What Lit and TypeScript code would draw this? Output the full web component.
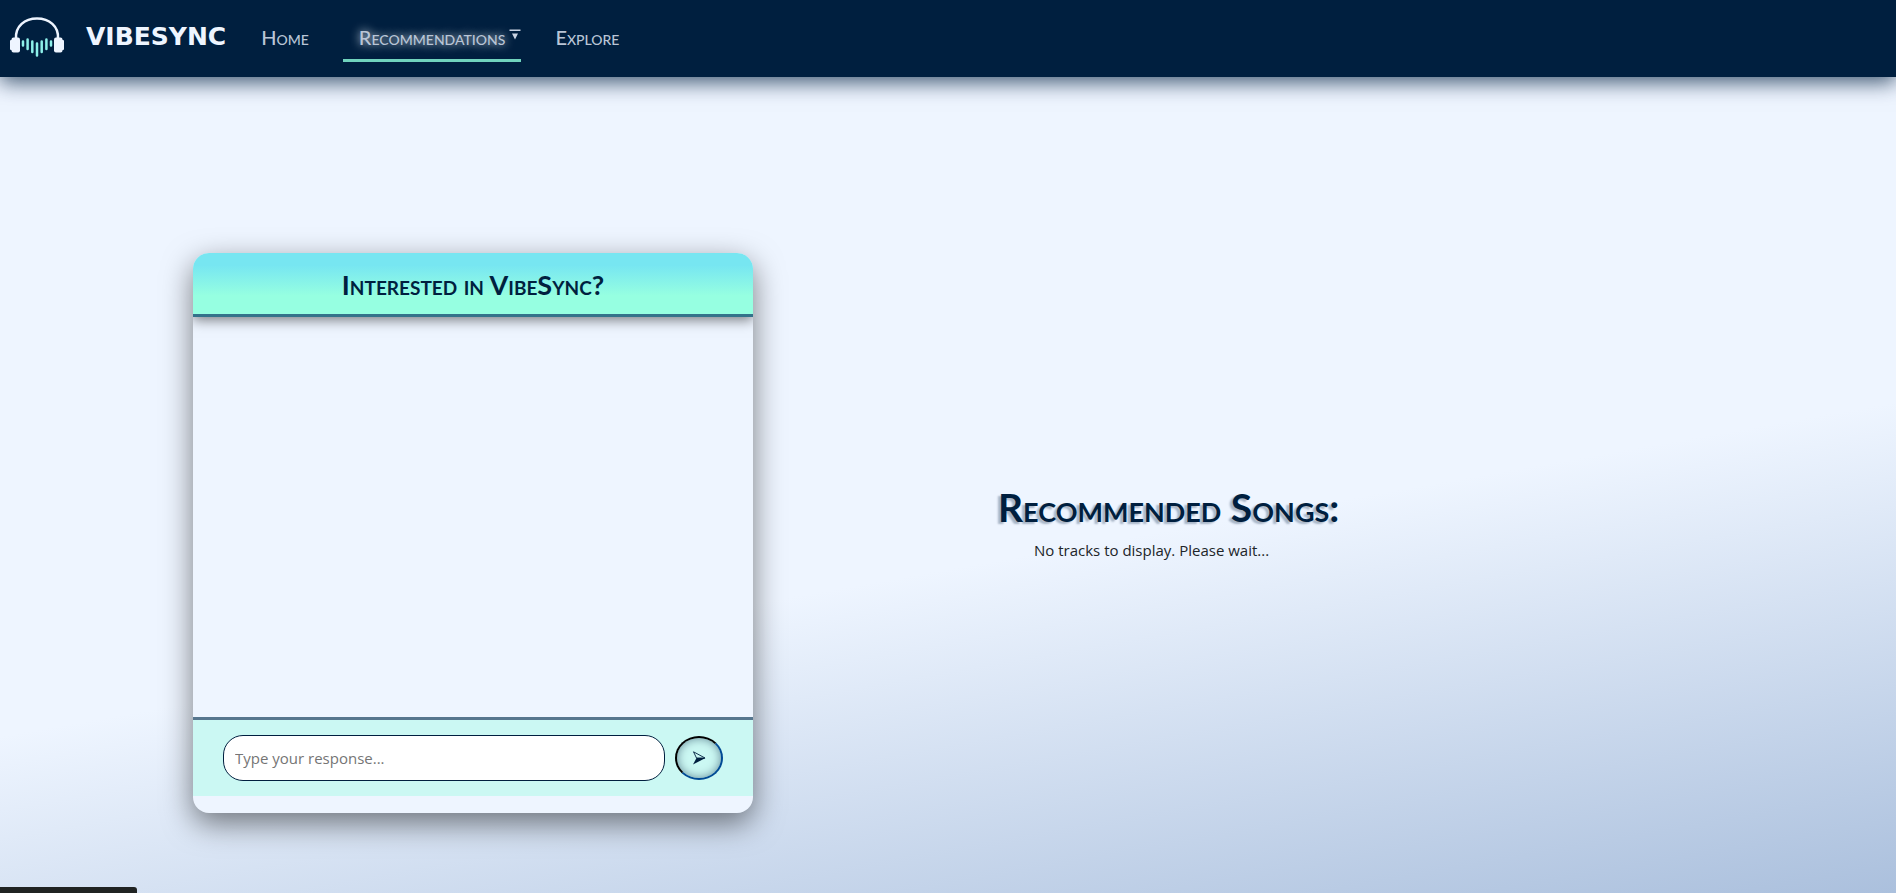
import { LitElement, html, css } from "lit";
import { customElement, state } from "lit/decorators.js";

@customElement("site-nav")
class SiteNav extends LitElement {
  static styles = css`
    :host {
      display: block;
    }
    .bar {
      display: flex;
      align-items: center;
      gap: 35px;
      min-height: 77px;
      padding-left: 10px;
      background: #001f3f;
      box-shadow: 0 5px 20px rgba(0, 31, 63, 0.75);
      box-sizing: border-box;
    }
    .brand {
      display: flex;
      align-items: center;
      gap: 22px;
      color: #eef5ff;
      text-decoration: none;
      font: bold 25px/32px "DejaVu Sans", sans-serif;
      padding-bottom: 3px;
    }
    .logo {
      width: 54px;
      height: 42px;
    }
    .links {
      display: flex;
      align-items: center;
      gap: 34px;
      margin: 0;
      padding: 0;
      list-style: none;
    }
    .link {
      display: flex;
      align-items: center;
      color: #b9c5d6;
      text-decoration: none;
      font: 500 20px/30px Lato, sans-serif;
      font-variant: small-caps;
      padding: 6px 0 7px;
      border-bottom: 3px solid transparent;
    }
    .link.active {
      padding-left: 16px;
      border-bottom-color: #70d3bd;
      text-shadow: 0 0 10px #eef5ff;
    }
    .caret {
      width: 12px;
      height: 12px;
      margin-left: 4px;
      margin-bottom: 3px;
    }
  `;

  render() {
    return html`
      <nav class="bar" aria-label="Main">
        <a class="brand" href="#">
          <svg class="logo" viewBox="0 0 54 42" aria-hidden="true">
            <path d="M6 23C5 10 15 2.500 27 2.500S49 10 48 23" fill="none" stroke="#eef5ff" stroke-width="2.600" />
            <rect x="1.500" y="21.500" width="8.500" height="15" rx="2" fill="#eef5ff" />
            <rect x="0" y="24" width="3" height="10" rx="1" fill="#eef5ff" />
            <rect x="44" y="21.500" width="8.500" height="15" rx="2" fill="#eef5ff" />
            <rect x="51" y="24" width="3" height="10" rx="1" fill="#eef5ff" />
            <path
              d="M13 25.500v4M17.600 23.500v9.500M22.300 25.500v10.500M27 27.500v12M31.700 25.500v10.500M36.400 23.500v9.500M41 25.500v4"
              stroke="#8df0ea"
              stroke-width="2.500"
              stroke-linecap="round"
            />
          </svg>
          <span>VIBESYNC</span>
        </a>
        <ul class="links">
          <li><a class="link" href="#home">Home</a></li>
          <li>
            <a class="link active" href="#recommendations" aria-current="page">
              Recommendations
              <svg class="caret" viewBox="0 0 12 12" aria-hidden="true">
                <path d="M0.500 0.500h11v1.500h-11zM3 4.500h6L6 10.500z" fill="#c9d3e2" />
              </svg>
            </a>
          </li>
          <li><a class="link" href="#explore">Explore</a></li>
        </ul>
      </nav>
    `;
  }
}

@customElement("chat-card")
class ChatCard extends LitElement {
  static styles = css`
    :host {
      display: block;
      width: min(560px, 90%);
    }
    .card {
      display: flex;
      flex-direction: column;
      padding-bottom: 17px;
      border-radius: 16px;
      background: #eef5ff;
      box-shadow: 0 10px 30px rgba(0, 0, 0, 0.5);
      overflow: hidden;
    }
    .title {
      margin: 0;
      padding: 15px 16px 12px;
      text-align: center;
      color: #001f3f;
      font: bold 27px/34px Lato, sans-serif;
      font-variant: small-caps;
      background: linear-gradient(#77e6f1 20%, #96ffe1 70%);
      border-bottom: 3px solid #33728a;
      box-shadow: 0 3px 12px rgba(0, 0, 0, 0.5);
    }
    .messages {
      height: 400px;
      overflow-y: auto;
    }
    .compose {
      display: flex;
      align-items: center;
      gap: 10px;
      padding: 15px 30px;
      background: #cbf8f3;
      border-top: 3px solid #56768e;
    }
    .field {
      flex: 1;
      min-width: 0;
      height: 46px;
      box-sizing: border-box;
      padding: 0 11px;
      border: 1px solid #001f3f;
      border-radius: 20px;
      background: #fff;
      color: #001f3f;
      font: 15px/24px "Open Sans", sans-serif;
    }
    .field::placeholder {
      color: #757575;
    }
    .send {
      display: grid;
      place-items: center;
      width: 48px;
      height: 44px;
      padding: 0;
      border: 2px solid;
      border-color: #000 #004a94 #004a94 #000;
      border-radius: 50%;
      background: #cbf8f3;
      box-shadow: inset 0 0 10px rgba(0, 31, 63, 0.5);
    }
    .arrow {
      width: 14px;
      height: 14px;
    }
  `;

  @state() private draft = "";

  render() {
    return html`
      <section class="card">
        <h2 class="title">Interested in VibeSync?</h2>
        <div class="messages" role="log"></div>
        <form class="compose" @submit=${this.send}>
          <input
            class="field"
            type="text"
            aria-label="Your response"
            placeholder="Type your response..."
            .value=${this.draft}
            @input=${(e: Event) => (this.draft = (e.target as HTMLInputElement).value)}
          />
          <button class="send" type="submit" aria-label="Send">
            <svg class="arrow" viewBox="0 0 14 14" aria-hidden="true">
              <path d="M1.500 0.800L13 7L4.500 7Z" fill="none" stroke="#001f3f" stroke-width="0.900" />
              <path d="M1 13.500L4.500 7H13.500Z" fill="#001f3f" />
            </svg>
          </button>
        </form>
      </section>
    `;
  }

  private send(e: Event) {
    e.preventDefault();
    this.draft = "";
  }
}

@customElement("app-root")
class AppRoot extends LitElement {
  static styles = css`
    :host {
      display: flex;
      flex-direction: column;
      min-height: 100vh;
      background: linear-gradient(170deg, #eef5ff 60%, #abc0dd 100%);
    }
    .content {
      flex: 1;
      display: grid;
      grid-template-columns: 1fr 1fr;
      align-items: center;
      padding-top: 96px;
      padding-right: 4px;
    }
    .chat {
      justify-self: center;
    }
    .songs {
      padding-left: 52px;
    }
    .heading {
      margin: 0 0 7px;
      color: #001f3f;
      font: bold 39px/48px Lato, sans-serif;
      font-variant: small-caps;
      text-shadow: -3px 2px 2px rgba(0, 31, 63, 0.3);
    }
    .empty {
      margin: 0 0 22px;
      padding-left: 36px;
      color: #212529;
      font: 15px/24px "Open Sans", sans-serif;
    }
    .status {
      position: absolute;
      left: 0;
      bottom: 0;
      width: 137px;
      height: 6px;
      border-radius: 0 3px 0 0;
      background: #202322;
    }
  `;

  render() {
    return html`
      <site-nav></site-nav>
      <main class="content">
        <chat-card class="chat"></chat-card>
        <section class="songs">
          <h1 class="heading">Recommended Songs:</h1>
          <p class="empty">No tracks to display. Please wait...</p>
        </section>
      </main>
      <div class="status"></div>
    `;
  }
}
